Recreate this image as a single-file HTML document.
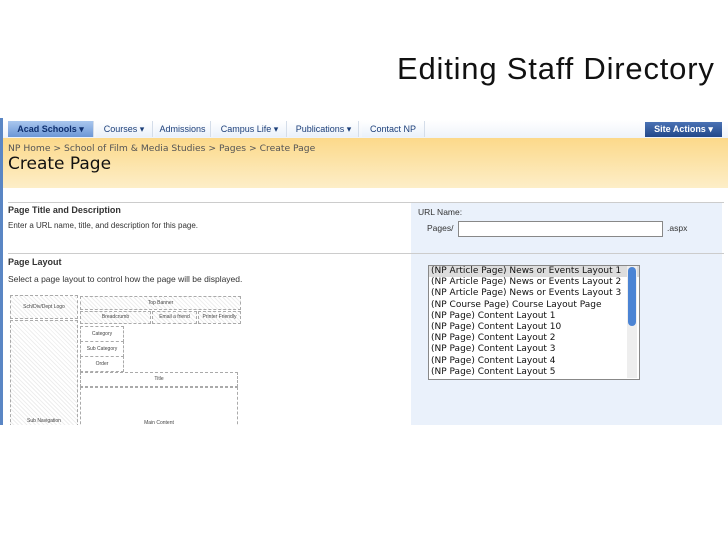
<!DOCTYPE html>
<html><head><style>
body{margin:0;width:728px;height:546px;background:#fff;position:relative;overflow:hidden;font-family:"Liberation Sans",sans-serif}
.a{position:absolute}
h1{position:absolute;left:397px;top:51px;margin:0;font-weight:normal;font-size:31px;color:#111;white-space:nowrap;letter-spacing:0.8px}
.tab{position:absolute;top:121px;height:16px;font-size:9px;color:#1c3f7a;line-height:16px;text-align:center;background:linear-gradient(#fff,#eaf1fa);border-right:1px solid #d4dde9}
.box{position:absolute;border:1px dashed #aaa;font-size:5px;color:#444;text-align:center;background:repeating-linear-gradient(45deg,#eee 0 1px,#fff 1px 3px)}
.plain{background:#fff}
.lb div{height:11.2px;line-height:11.2px;font-size:9px;white-space:nowrap;padding-left:2px}
</style></head><body>
<h1>Editing Staff Directory</h1>
<div class="a" style="left:0;top:118px;width:728px;height:307px;background:#fff"></div>
<div class="a" style="left:0;top:118px;width:3px;height:307px;background:#5a86c4"></div>
<div class="a" style="left:3px;top:120px;width:725px;height:18px;background:linear-gradient(#fff,#eef3fa)"></div>
<div class="tab" style="left:8px;width:85px;background:linear-gradient(#a9c6ee,#6c97d6);color:#0d2e6e;font-weight:bold">Acad Schools ▾</div>
<div class="tab" style="left:96px;width:56px">Courses ▾</div>
<div class="tab" style="left:155px;width:55px">Admissions</div>
<div class="tab" style="left:213px;width:73px">Campus Life ▾</div>
<div class="tab" style="left:289px;width:69px">Publications ▾</div>
<div class="tab" style="left:362px;width:62px">Contact NP</div>
<div class="a" style="left:645px;top:122px;width:77px;height:15px;background:linear-gradient(#4a72b4,#22488a);color:#fff;font-size:9px;font-weight:bold;line-height:15px;text-align:center">Site Actions ▾</div>
<div class="a" style="left:3px;top:138px;width:725px;height:50px;background:linear-gradient(#fcd98a,#fdeec8)"></div>
<div class="a" style="left:8px;top:143px;color:#555;font-family:'DejaVu Sans',sans-serif;font-size:9.2px">NP Home &gt; School of Film &amp; Media Studies &gt; Pages &gt; Create Page</div>
<div class="a" style="left:8px;top:154px;font-size:17px;color:#111;font-family:'DejaVu Sans',sans-serif">Create Page</div>
<div class="a" style="left:8px;top:202px;width:716px;height:1px;background:#ccc"></div>
<div class="a" style="left:411px;top:203px;width:311px;height:222px;background:#eaf1fb"></div>
<div class="a" style="left:8px;top:205px;font-size:9px;font-weight:bold;color:#333">Page Title and Description</div>
<div class="a" style="left:8px;top:221px;font-size:8px;color:#333">Enter a URL name, title, and description for this page.</div>
<div class="a" style="left:418px;top:207px;font-size:8.5px;color:#333">URL Name:</div>
<div class="a" style="left:427px;top:223px;font-size:8.5px;color:#333">Pages/</div>
<div class="a" style="left:458px;top:221px;width:203px;height:14px;background:#fff;border:1px solid #888"></div>
<div class="a" style="left:667px;top:223px;font-size:8.5px;color:#333">.aspx</div>
<div class="a" style="left:8px;top:253px;width:716px;height:1px;background:#ccc"></div>
<div class="a" style="left:8px;top:257px;font-size:9px;font-weight:bold;color:#333">Page Layout</div>
<div class="a" style="left:8px;top:274px;font-size:8.5px;color:#333">Select a page layout to control how the page will be displayed.</div>
<div class="a lb" style="left:428px;top:265px;width:210px;height:113px;background:#fff;border:1px solid #888;overflow:hidden;font-family:'DejaVu Sans',sans-serif;color:#111">
<div style="background:#ddd">(NP Article Page) News or Events Layout 1</div>
<div>(NP Article Page) News or Events Layout 2</div>
<div>(NP Article Page) News or Events Layout 3</div>
<div>(NP Course Page) Course Layout Page</div>
<div>(NP Page) Content Layout 1</div>
<div>(NP Page) Content Layout 10</div>
<div>(NP Page) Content Layout 2</div>
<div>(NP Page) Content Layout 3</div>
<div>(NP Page) Content Layout 4</div>
<div>(NP Page) Content Layout 5</div>
</div>
<div class="a" style="left:627px;top:266px;width:10px;height:112px;background:#eee"></div>
<div class="a" style="left:628px;top:267px;width:8px;height:59px;background:#4b84d4;border-radius:4px"></div>
<div class="box" style="left:10px;top:295px;width:66px;height:22px;line-height:22px">Sch/Div/Dept Logo</div>
<div class="box" style="left:10px;top:320px;width:66px;height:110px;line-height:200px">Sub Navigation</div>
<div class="box" style="left:80px;top:296px;width:159px;height:12px;line-height:12px">Top Banner</div>
<div class="box" style="left:80px;top:311px;width:69px;height:11px;line-height:11px">Breadcrumb</div>
<div class="box" style="left:152px;top:311px;width:43px;height:11px;line-height:11px">Email a friend</div>
<div class="box" style="left:198px;top:311px;width:41px;height:11px;line-height:11px">Printer Friendly</div>
<div class="box plain" style="left:80px;top:326px;width:42px;height:14px;line-height:14px">Category</div>
<div class="box plain" style="left:80px;top:341px;width:42px;height:14px;line-height:14px">Sub Category</div>
<div class="box plain" style="left:80px;top:356px;width:42px;height:14px;line-height:14px">Order</div>
<div class="box plain" style="left:80px;top:372px;width:156px;height:13px;line-height:13px">Title</div>
<div class="box plain" style="left:80px;top:387px;width:156px;height:50px;line-height:70px">Main Content</div>
<div class="a" style="left:0;top:425px;width:728px;height:121px;background:#fff"></div>
</body></html>
